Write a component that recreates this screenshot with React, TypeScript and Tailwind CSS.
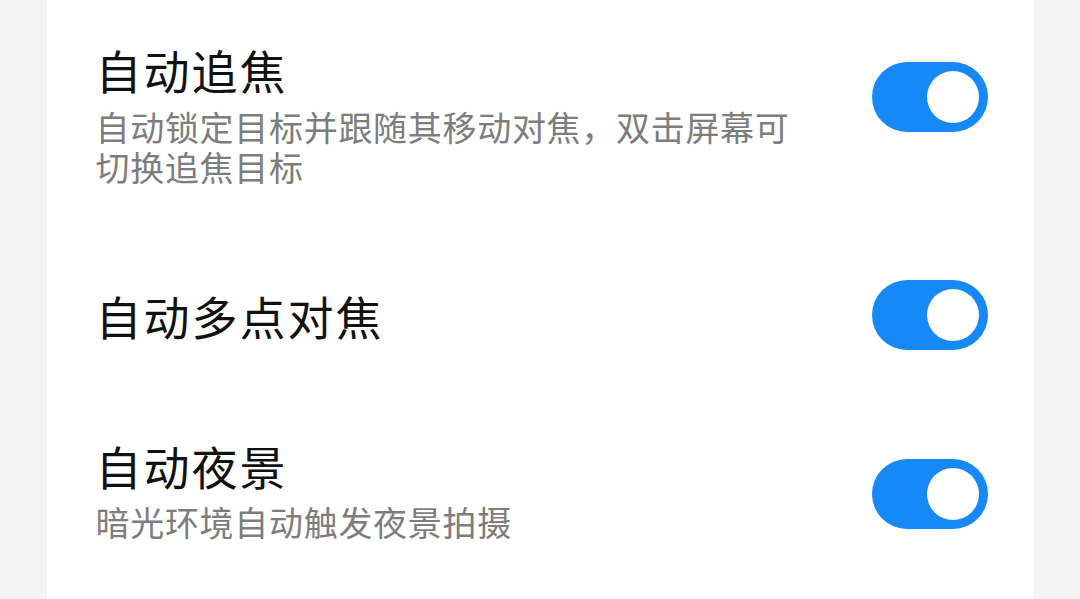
import React, { useState } from 'react'

const font = { fontFamily: '"Noto Sans CJK SC", "Noto Sans", sans-serif' }

const Toggle = ({ on, onChange, className = '' }: { on: boolean; onChange: () => void; className?: string }) => (
  <button
    onClick={onChange}
    className={`shrink-0 w-[116px] h-[70px] rounded-full p-[9px] flex items-center transition-colors ${
      on ? 'bg-[#1689f7] justify-end' : 'bg-[#dcdcdc] justify-start'
    } ${className}`}
  >
    <span className="block w-[52px] h-[52px] rounded-full bg-white" />
  </button>
)

export default function App() {
  const [tracking, setTracking] = useState(true)
  const [multi, setMulti] = useState(true)
  const [night, setNight] = useState(true)

  return (
    <div className="w-full h-[599px] bg-[#f3f3f3] flex justify-center overflow-hidden" style={font}>
      <div className="w-[987px] h-full bg-white pl-[49px] pr-[46px]">
        {/* 自动追焦 */}
        <div className="pt-[41px] flex items-start justify-between">
          <div className="max-w-[710px]">
            <div className="text-[46px] leading-[56px] tracking-[2px] text-[#111111]">自动追焦</div>
            <div className="mt-[10px] text-[34px] leading-[40px] tracking-[0.7px] text-[#7d7d7d]">
              自动锁定目标并跟随其移动对焦，双击屏幕可切换追焦目标
            </div>
          </div>
          <Toggle on={tracking} onChange={() => setTracking(!tracking)} className="mt-[21px]" />
        </div>

        {/* 自动多点对焦 */}
        <div className="mt-[93px] h-[70px] flex items-center justify-between">
          <div className="text-[46px] leading-[56px] tracking-[2px] text-[#111111]">自动多点对焦</div>
          <Toggle on={multi} onChange={() => setMulti(!multi)} />
        </div>

        {/* 自动夜景 */}
        <div className="mt-[87px] flex items-start justify-between">
          <div>
            <div className="text-[46px] leading-[56px] tracking-[2px] text-[#111111]">自动夜景</div>
            <div className="mt-[9px] text-[34px] leading-[40px] tracking-[0.7px] text-[#7d7d7d]">
              暗光环境自动触发夜景拍摄
            </div>
          </div>
          <Toggle on={night} onChange={() => setNight(!night)} className="mt-[22px]" />
        </div>
      </div>
    </div>
  )
}
